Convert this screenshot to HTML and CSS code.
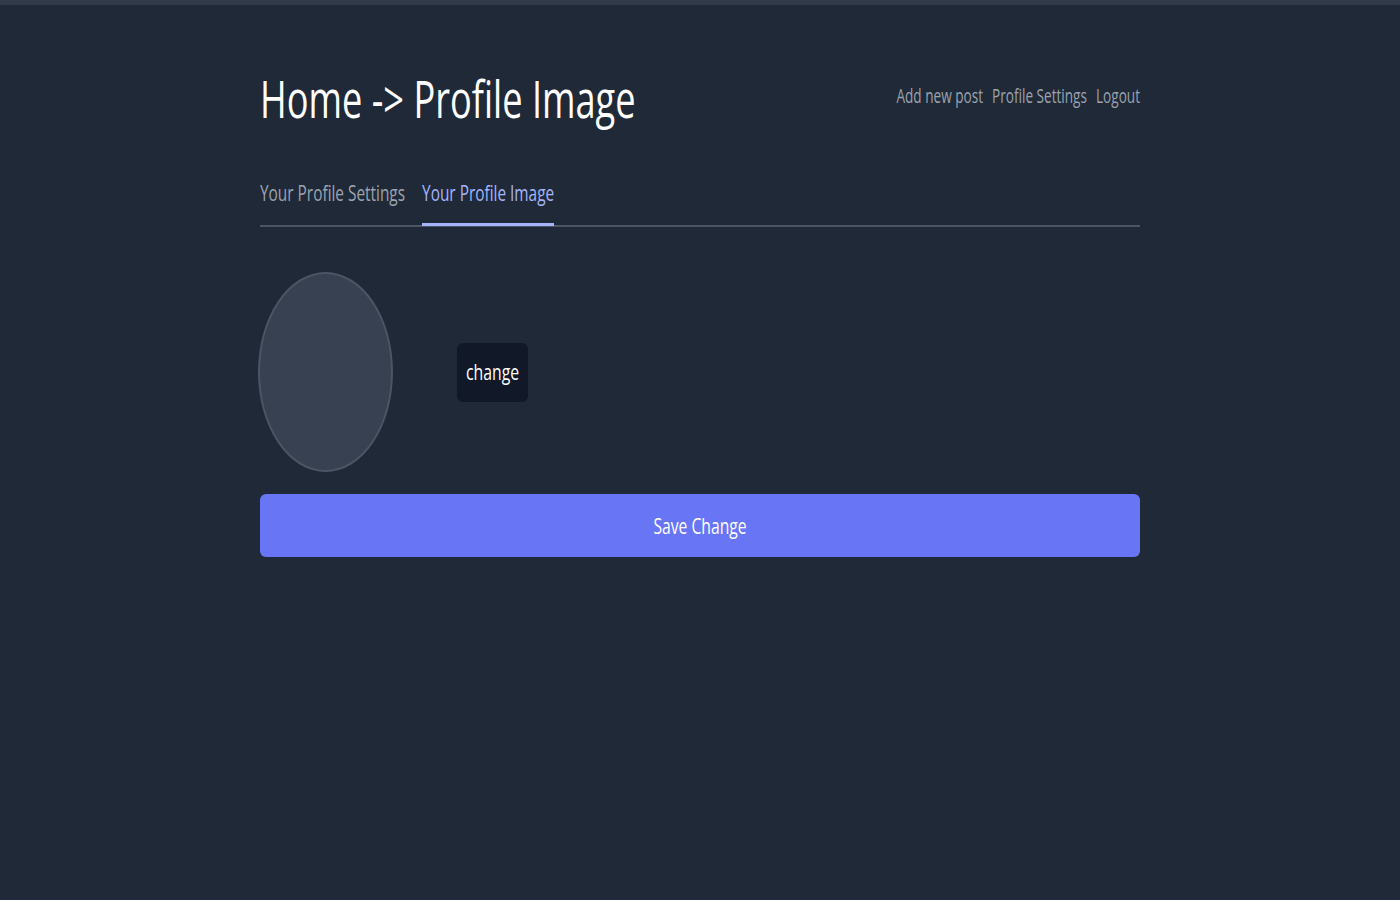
FILE: index.html
```html
<!DOCTYPE html>
<html lang="en">
<head>
<meta charset="utf-8">
<title>Profile Image</title>
<link rel="stylesheet" href="styles.css">
</head>
<body>
<div class="topbar"></div>
<main class="container">
  <header class="header">
    <h1 class="title"><span class="tx">Home -&gt; Profile Image</span></h1>
    <nav class="nav">
      <a href="#" class="nav-link"><span class="tx">Add new post</span></a>
      <a href="#" class="nav-link"><span class="tx">Profile Settings</span></a>
      <a href="#" class="nav-link"><span class="tx">Logout</span></a>
    </nav>
  </header>
  <div class="tabs">
    <a href="#" class="tab"><span class="tx">Your Profile Settings</span></a>
    <a href="#" class="tab active"><span class="tx">Your Profile Image</span></a>
  </div>
  <section class="image-row">
    <div class="avatar"></div>
    <button class="change-btn"><span class="tx">change</span></button>
  </section>
  <button class="save-btn"><span class="tx">Save Change</span></button>
</main>
</body>
</html>
```
FILE: styles.css
```css
* { box-sizing: border-box; }
html, body { margin: 0; padding: 0; }
body {
  background: #1f2937;
  font-family: "Open Sans", "Noto Sans", sans-serif;
  color: #fff;
  min-height: 900px;
}
.topbar { height: 5px; background: #313b4a; }
.tx { display: inline-block; transform: scaleY(1.4); transform-origin: center; }
.container { width: 880px; margin: 0 auto; }
.header {
  display: flex;
  justify-content: space-between;
  align-items: flex-start;
  padding-top: 69px;
}
.title {
  margin: 0;
  font-size: 36.2px;
  font-weight: 400;
  line-height: 48px;
  color: #fff;
}
.nav { display: flex; gap: 9px; padding-top: 2px; }
.nav-link {
  color: #9ca3af;
  text-decoration: none;
  font-size: 13.6px;
  line-height: 40px;
}
.tabs {
  display: flex;
  gap: 17px;
  margin-top: 57px;
  border-bottom: 2px solid #4b5563;
}
.tab {
  color: #9ca3af;
  text-decoration: none;
  font-size: 15.4px;
  line-height: 30px;
  padding-bottom: 14px;
  border-bottom: 3px solid transparent;
  margin-bottom: -1px;
}
.tab.active { color: #a5b4fc; border-bottom-color: #a5b4fc; }
.image-row {
  display: flex;
  align-items: center;
  gap: 64px;
  margin-top: 45px;
  margin-left: -2px;
}
.avatar {
  width: 135px;
  height: 200px;
  border-radius: 50%;
  background: #374151;
  border: 2px solid #4b5563;
}
.change-btn {
  background: #111827;
  color: #fff;
  border: none;
  border-radius: 6px;
  width: 71px;
  height: 59px;
  font-family: inherit;
  font-size: 15.8px;
  padding: 0;
}
.save-btn {
  display: block;
  width: 880px;
  height: 63px;
  margin-top: 22px;
  background: #6875f5;
  color: #fff;
  border: none;
  border-radius: 6px;
  font-family: inherit;
  font-size: 15.7px;
  padding: 0;
}
```
